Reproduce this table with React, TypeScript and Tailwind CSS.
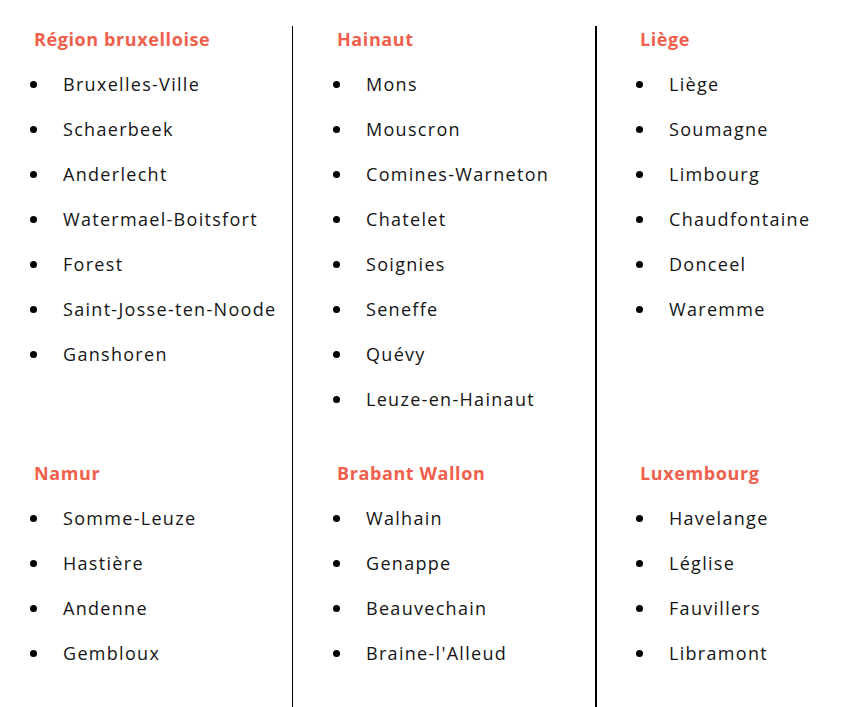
import React from "react";

type Section = { title: string; items: string[] };

const row1: Section[] = [
  { title: "Région bruxelloise", items: ["Bruxelles-Ville", "Schaerbeek", "Anderlecht", "Watermael-Boitsfort", "Forest", "Saint-Josse-ten-Noode", "Ganshoren"] },
  { title: "Hainaut", items: ["Mons", "Mouscron", "Comines-Warneton", "Chatelet", "Soignies", "Seneffe", "Quévy", "Leuze-en-Hainaut"] },
  { title: "Liège", items: ["Liège", "Soumagne", "Limbourg", "Chaudfontaine", "Donceel", "Waremme"] },
];
const row2: Section[] = [
  { title: "Namur", items: ["Somme-Leuze", "Hastière", "Andenne", "Gembloux"] },
  { title: "Brabant Wallon", items: ["Walhain", "Genappe", "Beauvechain", "Braine-l'Alleud"] },
  { title: "Luxembourg", items: ["Havelange", "Léglise", "Fauvillers", "Libramont"] },
];

function Block({ s, h }: { s: Section; h: string }) {
  return (
    <div className={h}>
      <div className="h-[26px] leading-[26px] text-[18px] font-bold tracking-[0.6px] text-[#ef5f4c]">{s.title}</div>
      <ul className="mt-[10px]">
        {s.items.map((it) => (
          <li key={it} className="h-[45px] flex items-center text-[18px] tracking-[1.3px] text-[#151515]">
            <span className="w-[7px] h-[7px] rounded-full bg-black ml-[-4px] mr-[26px] shrink-0" />
            <span>{it}</span>
          </li>
        ))}
      </ul>
    </div>
  );
}

export default function App() {
  const pads = ["pl-[34px] w-[293px] border-r border-black", "pl-[44px] w-[304px] border-r-2 border-black", "pl-[43px] flex-1"];
  return (
    <div className="w-[864px] h-[707px] bg-white overflow-hidden pt-[26px]" style={{ fontFamily: "'Open Sans', 'Noto Sans', sans-serif" }}>
      <div className="flex h-[681px]">
        {[0, 1, 2].map((i) => (
          <div key={i} className={pads[i] + " flex flex-col"}>
            <Block s={row1[i]} h="h-[434px]" />
            <Block s={row2[i]} h="flex-1" />
          </div>
        ))}
      </div>
    </div>
  );
}
